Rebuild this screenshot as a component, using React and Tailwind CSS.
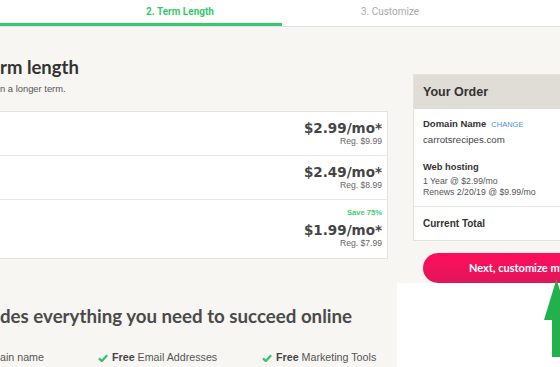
import React from "react";

const plans = [
  { price: "$2.99/mo*", reg: "Reg. $9.99", h: "h-[43px]" },
  { price: "$2.49/mo*", reg: "Reg. $8.99", h: "h-[44px] border-t border-[#ebe8e3]" },
  { price: "$1.99/mo*", reg: "Reg. $7.99", save: "Save 75%", h: "h-[59px] border-t border-[#ebe8e3]" },
];

function Check() {
  return (
    <svg width="10" height="8" viewBox="0 0 10 8" className="shrink-0">
      <path d="M1 4.3 L3.8 7 L9.2 1.2" fill="none" stroke="#33c46a" strokeWidth="2.3" strokeLinejoin="miter" />
    </svg>
  );
}

export default function App() {
  return (
    <div className="relative h-[367px] w-[560px] overflow-hidden bg-[#f7f6f2] font-['Liberation_Sans',Arial,sans-serif] text-[#444]">
      <nav className="border-b border-[#e2e2e2] bg-white">
        <div className="flex h-[23px] items-center font-['Roboto',sans-serif] text-[10px]">
          <div className="w-[75px] shrink-0" />
          <div className="w-[210px] shrink-0 text-center font-bold text-[#36c96b]">2. Term Length</div>
          <div className="w-[210px] shrink-0 text-center text-[#aaaaaa]">3. Customize</div>
        </div>
        <div className="h-[3px]">
          <div className="h-full w-[282px] bg-[#36c96b]" />
        </div>
      </nav>

      <div className="flex gap-[25px]">
        <main className="w-[388px] shrink-0">
          <h1 className="mt-[28px] font-['Lato',sans-serif] text-[18.5px] leading-[24px] font-bold whitespace-nowrap text-[#333]">
            rm length
          </h1>
          <p className="mt-[4px] text-[9.4px] leading-[12px] text-[#555]">n a longer term.</p>

          <div className="mt-[16px] ml-[-10px] w-[398px] border border-[#e6e3dd] bg-white">
            {plans.map((p) => (
              <div key={p.price} className={`flex flex-col items-end justify-center pr-[5px] pb-[2px] ${p.h}`}>
                {p.save && (
                  <span className="mb-[4px] text-[7.6px] leading-[8px] font-bold text-[#3ccf6e]">{p.save}</span>
                )}
                <span className="font-['DejaVu_Sans',sans-serif] text-[13.5px] leading-[18px] font-bold text-[#454545]">
                  {p.price}
                </span>
                <span className="text-[8.6px] leading-[9px] text-[#666]">{p.reg}</span>
              </div>
            ))}
          </div>

          <h2 className="mt-[46px] font-['Lato',sans-serif] text-[18.7px] leading-[22px] font-bold whitespace-nowrap text-[#4a4a4a]">
            des everything you need to succeed online
          </h2>

          <div className="mt-[24px] flex items-center text-[10.7px] leading-[13px] whitespace-nowrap text-[#555]">
            <div className="w-[98px] shrink-0">ain name</div>
            <div className="flex w-[164px] shrink-0 items-center">
              <Check />
              <span className="ml-[4px] font-bold text-[#444]">Free</span>
              <span className="ml-[3px]">Email Addresses</span>
            </div>
            <div className="flex w-[164px] shrink-0 items-center">
              <Check />
              <span className="ml-[4px] font-bold text-[#444]">Free</span>
              <span className="ml-[3px]">Marketing Tools</span>
            </div>
          </div>
        </main>

        <aside className="w-[220px] shrink-0 pt-[47px]">
          <div className="border border-[#e6e3dd] bg-white">
            <div className="flex h-[34px] items-center bg-[#e0dcd6] px-[9px] text-[12.5px] font-bold text-[#333]">
              Your Order
            </div>
            <div className="px-[9px] pt-[9px] pb-[8px]">
              <div className="flex items-baseline leading-[12px]">
                <span className="text-[9.5px] font-bold text-[#333]">Domain Name</span>
                <span className="ml-[5px] text-[7.5px] text-[#4a90e2]">CHANGE</span>
              </div>
              <div className="mt-[3px] text-[9.7px] leading-[12px] text-[#444]">carrotsrecipes.com</div>
              <div className="mt-[15px] text-[9.3px] leading-[12px] font-bold text-[#333]">Web hosting</div>
              <div className="mt-[3px] text-[8.7px] leading-[11px] text-[#555]">1 Year @ $2.99/mo</div>
              <div className="text-[8.7px] leading-[11px] whitespace-nowrap text-[#555]">Renews 2/20/19 @ $9.99/mo</div>
            </div>
            <div className="flex h-[34px] items-center border-t border-[#ebe8e3] px-[9px] text-[10px] font-bold text-[#333]">
              Current Total
            </div>
          </div>

          <button className="mt-[12px] ml-[10px] flex h-[30px] w-[210px] items-center rounded-full bg-linear-to-b from-[#ff0c5c] to-[#e0165a] pl-[46px] font-['Lato',sans-serif] text-[11px] font-bold whitespace-nowrap text-white">
            Next, customize my site
          </button>
        </aside>
      </div>

      <div className="absolute top-[283px] right-0 bottom-0 left-[397px] bg-white" />
      <svg className="absolute top-[275px] left-[540px] overflow-visible" width="20" height="85" viewBox="0 0 20 85">
        <polygon points="16.5,4 4,45 12,45 12,82 21,82 21,45 29,45" fill="#22b14c" />
      </svg>
    </div>
  );
}
